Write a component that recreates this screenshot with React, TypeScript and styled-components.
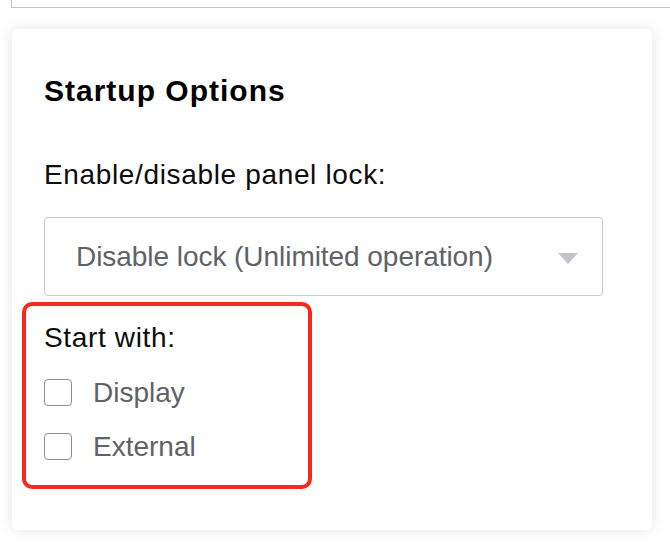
import React from "react";
import styled, { createGlobalStyle } from "styled-components";

const GlobalStyle = createGlobalStyle`
  html, body {
    margin: 0;
    padding: 0;
    background: #ffffff;
  }
  body {
    font-family: "Liberation Sans", Arial, Helvetica, sans-serif;
    overflow: hidden;
  }
`;

const Page = styled.div`
  width: 670px;
  height: 552px;
  overflow: hidden;
  display: flex;
  flex-direction: column;
`;

const TopBox = styled.div`
  height: 8px;
  margin-left: 11px;
  margin-right: -20px;
  border-left: 1px solid #c4c4c4;
  border-bottom: 1px solid #c4c4c4;
  box-sizing: border-box;
`;

const Card = styled.section`
  margin: 21px 18px 0 12px;
  padding: 44px 32px 41px 32px;
  background: #ffffff;
  border-radius: 6px;
  box-shadow: 0 0 14px rgba(0, 0, 0, 0.11);
  display: flex;
  flex-direction: column;
  align-items: flex-start;
`;

const Title = styled.h2`
  margin: 0;
  font-size: 30px;
  line-height: 36px;
  font-weight: 700;
  letter-spacing: 1px;
  color: #000000;
`;

const FieldLabel = styled.div<{ $gap: number }>`
  margin-top: ${(p) => p.$gap}px;
  font-size: 28px;
  line-height: 34px;
  letter-spacing: 0.65px;
  color: #0d0d0d;
`;

const Select = styled.div`
  margin-top: 25px;
  box-sizing: border-box;
  width: 559px;
  height: 79px;
  border: 1px solid #c9cacd;
  border-radius: 4px;
  padding: 0 24px 0 31px;
  display: flex;
  align-items: center;
  justify-content: space-between;
`;

const SelectValue = styled.span`
  font-size: 28px;
  letter-spacing: -0.05px;
  color: #606266;
`;

const Caret = styled.svg`
  width: 20px;
  height: 11px;
  margin-top: 3px;
  display: block;
`;

const Highlight = styled.div`
  margin-top: 6px;
  margin-left: -22px;
  box-sizing: border-box;
  width: 290px;
  border: 4px solid #f8281c;
  border-radius: 10px;
  padding: 15px 0 25px 18px;
  display: flex;
  flex-direction: column;
`;

const OptionList = styled.div`
  margin-top: 24px;
  display: flex;
  flex-direction: column;
  gap: 27px;
`;

const OptionRow = styled.label`
  display: flex;
  align-items: center;
  gap: 21px;
  height: 27px;
`;

const Box = styled.span`
  box-sizing: border-box;
  width: 28px;
  height: 27px;
  border: 1px solid #8c9099;
  border-radius: 4px;
  background: #ffffff;
  flex: none;
`;

const OptionText = styled.span`
  font-size: 28px;
  line-height: 34px;
  color: #606266;
`;

const options = ["Display", "External"];

export default function App() {
  return (
    <Page>
      <GlobalStyle />
      <TopBox />
      <Card>
        <Title>Startup Options</Title>
        <FieldLabel $gap={49}>Enable/disable panel lock:</FieldLabel>
        <Select>
          <SelectValue>Disable lock (Unlimited operation)</SelectValue>
          <Caret viewBox="0 0 20 11">
            <path d="M0 0 H20 L10 11 Z" fill="#c0c4cc" />
          </Caret>
        </Select>
        <Highlight>
          <FieldLabel $gap={0}>Start with:</FieldLabel>
          <OptionList>
            {options.map((o) => (
              <OptionRow key={o}>
                <Box />
                <OptionText>{o}</OptionText>
              </OptionRow>
            ))}
          </OptionList>
        </Highlight>
      </Card>
    </Page>
  );
}
